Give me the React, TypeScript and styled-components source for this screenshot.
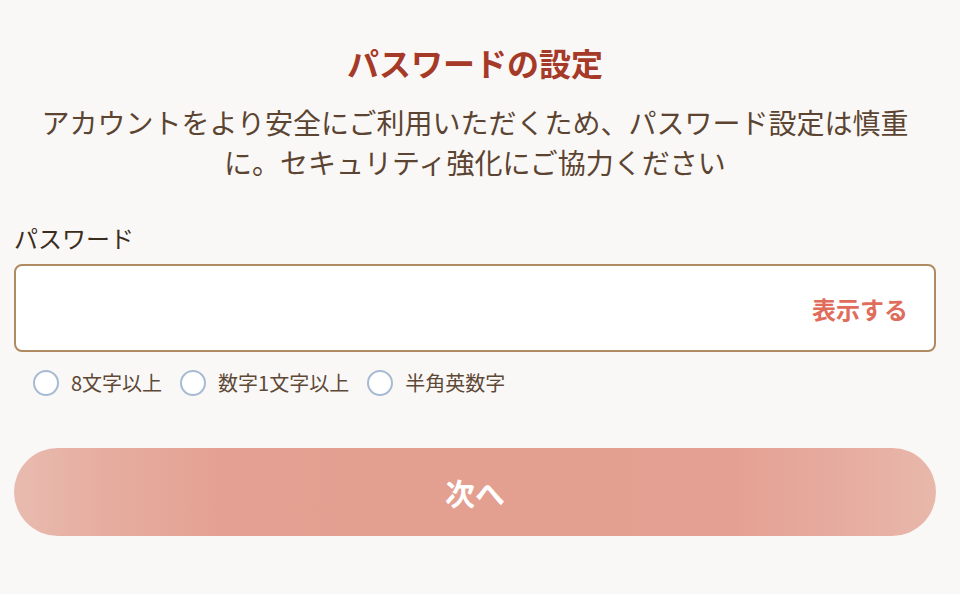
import React from "react";
import styled, { createGlobalStyle } from "styled-components";

const GlobalStyle = createGlobalStyle`
  html, body {
    margin: 0;
    padding: 0;
    background: #faf8f6;
  }
  body {
    font-family: "Noto Sans CJK JP", "Noto Sans", sans-serif;
  }
`;

const Page = styled.main`
  box-sizing: border-box;
  width: 960px;
  min-height: 594px;
  padding: 42px 24px 0 14px;
  display: flex;
  flex-direction: column;
`;

const Title = styled.h1`
  margin: 0;
  font-size: 32px;
  line-height: 40px;
  font-weight: 700;
  color: #a63a29;
  text-align: center;
`;

const Lead = styled.p`
  margin: 20px 0 0;
  font-size: 28px;
  line-height: 40px;
  font-weight: 400;
  color: #5b4431;
  text-align: center;
`;

const Label = styled.label`
  margin-top: 41px;
  font-size: 24px;
  line-height: 30px;
  color: #3b2c20;
`;

const Field = styled.div`
  box-sizing: border-box;
  margin-top: 11px;
  height: 88px;
  border: 2px solid #b08a62;
  border-radius: 8px;
  background: #ffffff;
  display: flex;
  align-items: center;
  padding: 0 26px 0 16px;
`;

const Input = styled.input`
  flex: 1;
  border: none;
  outline: none;
  background: transparent;
  font-family: inherit;
  font-size: 22px;
  color: #3b2c20;
`;

const Toggle = styled.button`
  border: none;
  background: none;
  padding: 0;
  font-family: inherit;
  font-size: 24px;
  font-weight: 700;
  color: #e06d5b;
  cursor: pointer;
`;

const Rules = styled.ul`
  list-style: none;
  margin: 18px 0 0;
  padding: 0 0 0 19px;
  display: flex;
  gap: 18px;
`;

const Rule = styled.li`
  display: flex;
  align-items: center;
  gap: 12px;
  font-size: 20px;
  line-height: 26px;
  color: #5e4937;
`;

const Circle = styled.span`
  box-sizing: border-box;
  width: 26px;
  height: 26px;
  border-radius: 50%;
  border: 2px solid #a6bbd3;
  background: #ffffff;
`;

const Next = styled.button`
  margin-top: 52px;
  height: 88px;
  border: none;
  border-radius: 44px;
  background: linear-gradient(
    90deg,
    #e8bbaf 0%,
    #e6ad9f 10%,
    #e4a193 22%,
    #e39f90 50%,
    #e4a193 78%,
    #e6ac9f 90%,
    #e8b8ab 100%
  );
  color: #ffffff;
  font-family: inherit;
  font-size: 30px;
  font-weight: 700;
  cursor: pointer;
`;

const rules = ["8文字以上", "数字1文字以上", "半角英数字"];

export default function App() {
  return (
    <>
      <GlobalStyle />
      <Page>
        <Title>パスワードの設定</Title>
        <Lead>
          アカウントをより安全にご利用いただくため、パスワード設定は慎重に。セキュリティ強化にご協力ください
        </Lead>
        <Label htmlFor="pw">パスワード</Label>
        <Field>
          <Input id="pw" type="password" />
          <Toggle type="button">表示する</Toggle>
        </Field>
        <Rules>
          {rules.map((r) => (
            <Rule key={r}>
              <Circle />
              {r}
            </Rule>
          ))}
        </Rules>
        <Next type="button">次へ</Next>
      </Page>
    </>
  );
}
